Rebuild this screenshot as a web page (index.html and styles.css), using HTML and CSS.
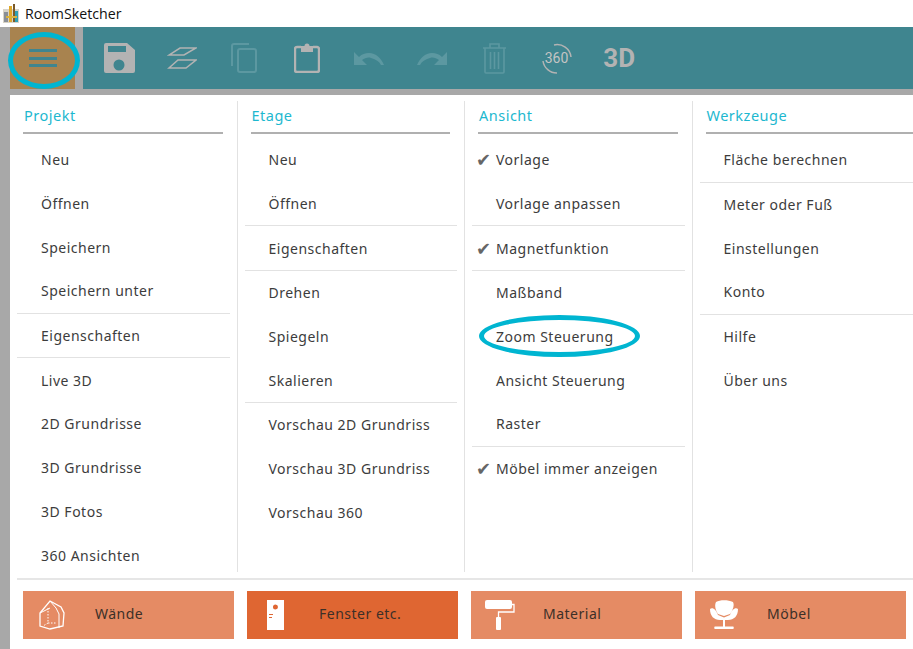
FILE: index.html
```html
<!DOCTYPE html>
<html lang="de">
<head>
    <meta charset="UTF-8">
    <title>RoomSketcher</title>
    <link rel="stylesheet" href="styles.css">
</head>
<body>
    <header class="titlebar">
        <svg class="app-icon" width="16" height="19" viewBox="0 0 16 19">
            <rect x="0" y="5" width="16" height="14" fill="#d8d4c8"/>
            <rect x="1" y="8" width="4" height="10" fill="#8a8f96"/>
            <rect x="6" y="2" width="3" height="16" fill="#e0a92c"/>
            <rect x="10" y="0" width="2" height="18" fill="#7a5a2a"/>
            <rect x="12" y="7" width="3" height="11" fill="#2f9fb5"/>
            <rect x="3" y="12" width="11" height="2" fill="#d9b23c"/>
        </svg>
        <span>RoomSketcher</span>
    </header>

    <div class="workspace">
        <div class="topbar">
            <button class="menu-btn">
                <span></span><span></span><span></span>
                <i class="ring ring-menu"></i>
            </button>
            <div class="toolbar">
                <div class="tool">
                    <svg width="31" height="30" viewBox="0 0 31 30"><path fill="#b3b3b3" fill-rule="evenodd" d="M2 0h21l8 7v21a2 2 0 0 1-2 2H2a2 2 0 0 1-2-2V2a2 2 0 0 1 2-2zM4 3v6h18V3zM15 16.500a5.500 5.500 0 1 0 0 11 5.500 5.500 0 0 0 0-11z"/></svg>
                </div>
                <div class="tool">
                    <svg width="30" height="22" viewBox="0 0 30 22" fill="none" stroke="#b3b3b3" stroke-width="1.500"><path d="M13 1h16L17 8H2z"/><path d="M11 13h18L19 21H2z"/></svg>
                </div>
                <div class="tool dim">
                    <svg width="26" height="30" viewBox="0 0 26 30" fill="none" stroke="#5c98a1" stroke-width="2"><path d="M1 23V3a2 2 0 0 1 2-2h15"/><rect x="7" y="6" width="18" height="23" rx="2"/></svg>
                </div>
                <div class="tool">
                    <svg width="26" height="30" viewBox="0 0 26 30" fill="none" stroke="#b3b3b3" stroke-width="2.400"><path d="M7 4H3a2 2 0 0 0-2 2v21a2 2 0 0 0 2 2h20a2 2 0 0 0 2-2V6a2 2 0 0 0-2-2h-4"/><path fill="#b3b3b3" stroke="none" d="M7 3h3.500a2.500 2.500 0 0 1 5 0H19v6H7z"/></svg>
                </div>
                <div class="tool dim">
                    <svg width="30" height="14" viewBox="0 0 30 14"><path fill="#5c98a1" d="M0 1v13h13L8 9c3-2 6-3 9-2 4 1 8 3 10 7h3C27 7 22 2 15 2 11 2 8 3 5 6z"/></svg>
                </div>
                <div class="tool dim">
                    <svg width="30" height="14" viewBox="0 0 30 14"><path fill="#5c98a1" d="M30 1v13H17l5-5c-3-2-6-3-9-2-4 1-8 3-10 7H0C3 7 8 2 15 2c4 0 7 1 10 4z"/></svg>
                </div>
                <div class="tool dim">
                    <svg width="23" height="31" viewBox="0 0 23 31" fill="none" stroke="#5c98a1" stroke-width="1.600"><path d="M0 5h23M7 5V1h9v4"/><path d="M2 5v24a1 1 0 0 0 1 1h17a1 1 0 0 0 1-1V5"/><path d="M7.500 9v17M11.500 9v17M15.500 9v17"/></svg>
                </div>
                <div class="tool">
                    <div class="pano">
                        <svg width="30" height="31" viewBox="0 0 30 31" fill="none" stroke="#b3b3b3" stroke-width="1.500"><path d="M12 2a14 14 0 0 1 17 12"/><path d="M1 18a14 14 0 0 0 14 12"/></svg>
                        <span>360</span>
                    </div>
                </div>
                <div class="tool label-3d">3D</div>
            </div>
        </div>

        <main class="panel">
            <div class="columns">
                <section class="col">
                    <h2>Projekt</h2>
                    <ul>
                        <li>Neu</li>
                        <li>Öffnen</li>
                        <li>Speichern</li>
                        <li class="sep">Speichern unter</li>
                        <li class="sep">Eigenschaften</li>
                        <li>Live 3D</li>
                        <li>2D Grundrisse</li>
                        <li>3D Grundrisse</li>
                        <li>3D Fotos</li>
                        <li>360 Ansichten</li>
                    </ul>
                </section>
                <section class="col">
                    <h2>Etage</h2>
                    <ul>
                        <li>Neu</li>
                        <li class="sep">Öffnen</li>
                        <li class="sep">Eigenschaften</li>
                        <li>Drehen</li>
                        <li>Spiegeln</li>
                        <li class="sep">Skalieren</li>
                        <li>Vorschau 2D Grundriss</li>
                        <li>Vorschau 3D Grundriss</li>
                        <li>Vorschau 360</li>
                    </ul>
                </section>
                <section class="col">
                    <h2>Ansicht</h2>
                    <ul>
                        <li class="checked">Vorlage</li>
                        <li class="sep">Vorlage anpassen</li>
                        <li class="checked sep">Magnetfunktion</li>
                        <li>Maßband</li>
                        <li>Zoom Steuerung<i class="ring ring-zoom"></i></li>
                        <li>Ansicht Steuerung</li>
                        <li class="sep">Raster</li>
                        <li class="checked">Möbel immer anzeigen</li>
                    </ul>
                </section>
                <section class="col">
                    <h2>Werkzeuge</h2>
                    <ul>
                        <li class="sep">Fläche berechnen</li>
                        <li>Meter oder Fuß</li>
                        <li>Einstellungen</li>
                        <li class="sep">Konto</li>
                        <li>Hilfe</li>
                        <li>Über uns</li>
                    </ul>
                </section>
            </div>

            <nav class="tabs">
                <a class="tab">
                    <svg width="26" height="30" viewBox="0 0 26 30" fill="none" stroke="#fff" stroke-width="1.300"><path d="M1 26 1 13 11 1l11 6 3 6-1 13-13 3z"/><path d="M11 1l6 7 3 6v14M1 13l10-5" stroke-width="1"/><path d="M9 8v15h9M9 23l-5 3" stroke-width="1" stroke-dasharray="1.500 1.500"/></svg>
                    <span>Wände</span>
                </a>
                <a class="tab active">
                    <svg width="17" height="30" viewBox="0 0 17 30"><path fill="#fff" fill-rule="evenodd" d="M0 0h17v30H0zM8.500 4.500a2.500 2.500 0 1 0 0 5 2.500 2.500 0 0 0 0-5zM2 14v1h4v-1zM2 17v1h3v-1z"/></svg>
                    <span>Fenster etc.</span>
                </a>
                <a class="tab">
                    <svg width="30" height="30" viewBox="0 0 30 30" fill="none" stroke="#fff"><rect x="0" y="0" width="27" height="9" rx="2" fill="#fff" stroke="none"/><path d="M27 4.500h2V12H13.500v5" stroke-width="1.300"/><rect x="11" y="17" width="5" height="13" rx="1" fill="#fff" stroke="none"/></svg>
                    <span>Material</span>
                </a>
                <a class="tab">
                    <svg width="28" height="29" viewBox="0 0 28 29"><path fill="#fff" d="M6 2c4-2.500 12-2.500 17 0 2 4-1 9-3 12l-6 2-6-2C6 11 4 6 6 2zM0 9c3-2 6 1 8 6l6 2.500L20 15c2-5 5-8 8-6 0 7-4 11-10 11h-8C4 20 0 16 0 9zM13 20h2v7h-2zM5 26.500h18c1 0 1 2.500 0 2.500H5c-1 0-1-2.500 0-2.500z"/></svg>
                    <span>Möbel</span>
                </a>
            </nav>
        </main>
    </div>
</body>
</html>
```

FILE: styles.css
```css
* {
    box-sizing: border-box;
}

html, body {
    height: 100%;
}

body {
    margin: 0;
    display: flex;
    flex-direction: column;
    overflow: hidden;
    font-family: "Noto Sans", sans-serif;
    font-size: 14px;
    letter-spacing: 0.5px;
    color: #3c3c3c;
    background-color: #fff;
}

.titlebar {
    height: 27px;
    flex: none;
    display: flex;
    align-items: center;
    gap: 6px;
    padding-left: 3px;
    font-family: "Open Sans", sans-serif;
    font-size: 14.200px;
    letter-spacing: 0;
    color: #111;
}

.workspace {
    flex: 1;
    display: flex;
    flex-direction: column;
    background-color: #a8a8a8;
}

.topbar {
    height: 68px;
    flex: none;
    display: flex;
    gap: 8px;
    padding: 0 0 6px 10px;
}

.menu-btn {
    position: relative;
    width: 65px;
    border: none;
    padding: 0;
    background-color: #a8834f;
    display: flex;
    flex-direction: column;
    align-items: center;
    justify-content: center;
    gap: 4.500px;
}

.menu-btn span {
    width: 28px;
    height: 3px;
    background-color: #3f858f;
}

.ring {
    position: absolute;
    border: 5px solid #00b5d1;
    border-radius: 50%;
}

.ring-menu {
    left: -2px;
    top: 5px;
    width: 72px;
    height: 57px;
}

.ring-zoom {
    left: 7px;
    top: 0;
    width: 161px;
    height: 42px;
}

.toolbar {
    flex: 1;
    display: flex;
    padding-left: 5px;
    background-color: #3f858f;
}

.tool {
    width: 62.500px;
    display: flex;
    align-items: center;
    justify-content: center;
}

.label-3d {
    font-family: "Roboto", sans-serif;
    font-size: 26px;
    font-weight: 700;
    letter-spacing: 0;
    color: #b3b3b3;
}

.pano {
    position: relative;
    width: 30px;
    height: 31px;
}

.pano span {
    position: absolute;
    left: 3px;
    top: 7px;
    font-family: "Roboto", sans-serif;
    font-size: 14px;
    letter-spacing: 0;
    color: #c4c4c4;
}

.panel {
    flex: 1;
    margin-left: 10px;
    display: flex;
    flex-direction: column;
    background-color: #fff;
}

.columns {
    height: 483px;
    flex: none;
    padding-top: 6px;
    display: grid;
    grid-template-columns: 227.500px 227.500px 227.500px 1fr;
}

.col {
    height: 471px;
    padding-left: 7px;
    border-right: 1px solid #e2e2e2;
}

.col:last-child {
    border-right: none;
}

.col h2 {
    margin: 0 14px 0 6px;
    height: 33px;
    padding: 4px 0 0 1px;
    font-size: 14.500px;
    font-weight: 400;
    color: #1db8cf;
    border-bottom: 2px solid #b0b0b0;
}

.col:last-child h2 {
    margin-right: 0;
}

.col ul {
    list-style: none;
    margin: 0;
    padding: 4px 0 0 0;
}

.col li {
    position: relative;
    height: 43.700px;
    padding-left: 24px;
    display: flex;
    align-items: center;
    margin-right: 7px;
}

.col:last-child li {
    margin-right: 0;
}

.col li.sep {
    height: 44.700px;
    border-bottom: 1px solid #e2e2e2;
}

.col li.checked::before {
    content: "✔";
    position: absolute;
    left: 4px;
    font-family: "DejaVu Sans", sans-serif;
    font-size: 18px;
    color: #666;
}

.tabs {
    flex: 1;
    margin-left: 7px;
    padding: 11px 7px 10.500px 6px;
    border-top: 2px solid #e6e6e6;
    display: grid;
    grid-template-columns: repeat(4, 211px);
    gap: 13px;
}

.tab {
    display: grid;
    grid-template-columns: 57px 1fr;
    align-items: center;
    justify-items: center;
    color: #3c3028;
    background-color: #e58b64;
}

.tab.active {
    background-color: #df6632;
}

.tab span {
    justify-self: start;
    margin-left: 15px;
    margin-bottom: 2px;
}
```
